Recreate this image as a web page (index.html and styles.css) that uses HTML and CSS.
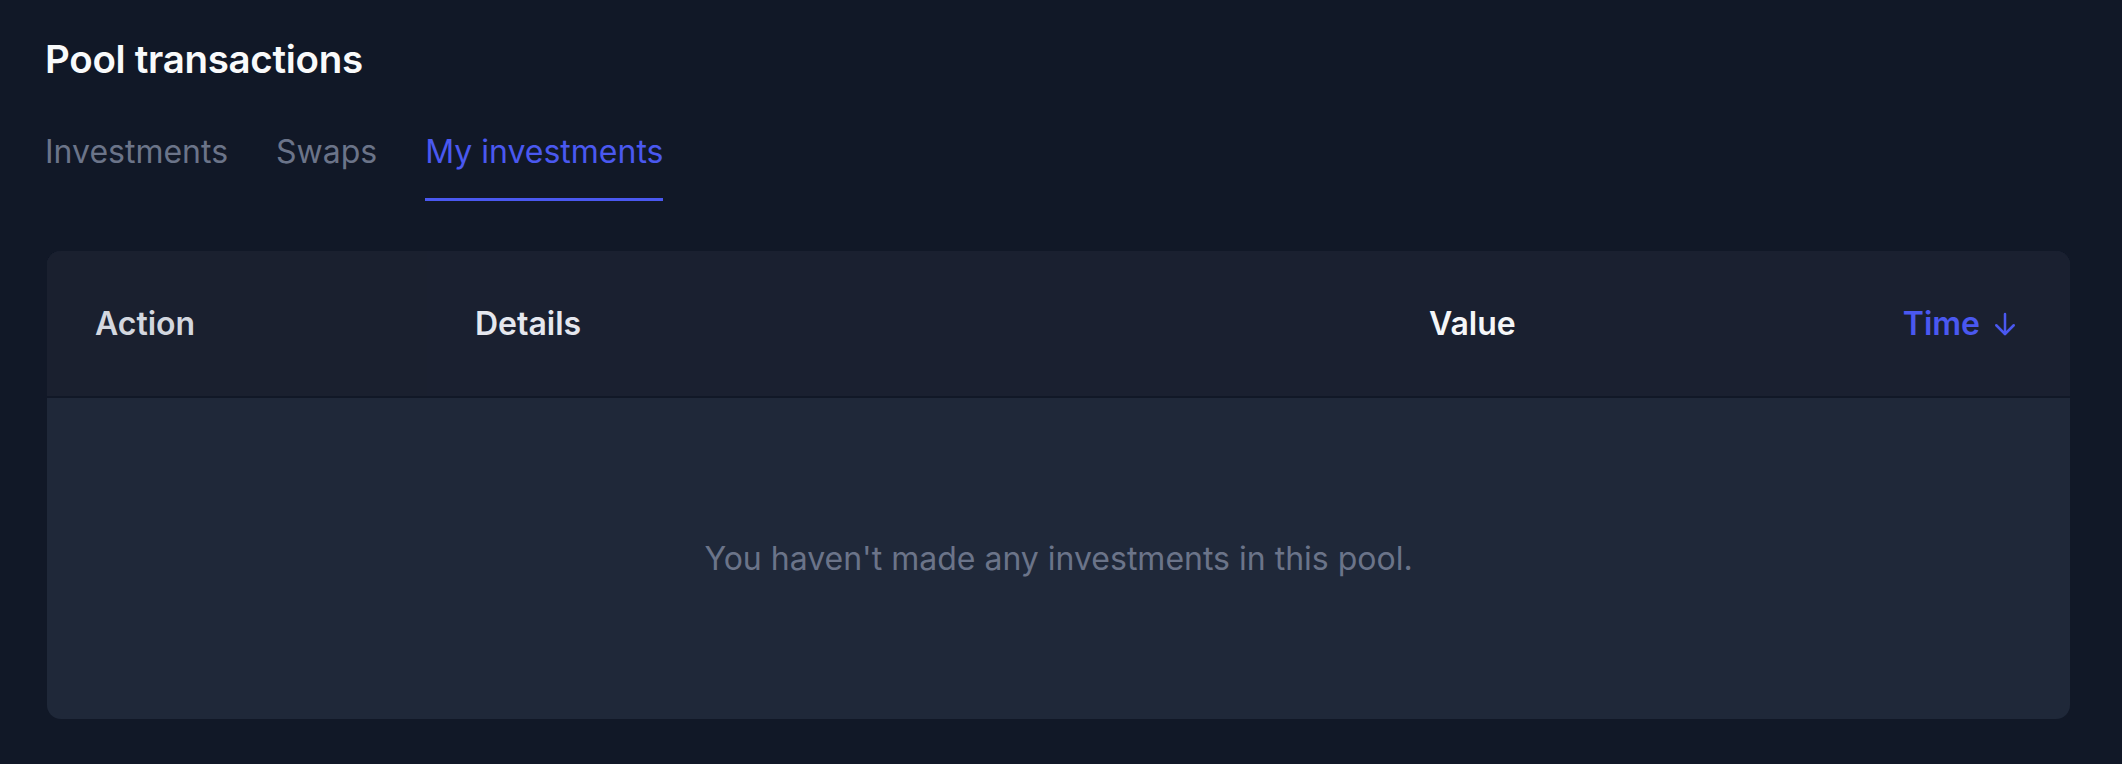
FILE: index.html
```html
<!DOCTYPE html>
<html lang="en">
<head>
<meta charset="utf-8">
<title>Pool transactions</title>
<link rel="stylesheet" href="styles.css">
</head>
<body>
<main class="page">
  <h2 class="title">Pool transactions</h2>
  <nav class="tabs">
    <a class="tab">Investments</a>
    <a class="tab">Swaps</a>
    <a class="tab tab-active">My investments</a>
  </nav>
  <section class="card">
    <div class="thead">
      <div class="th th-action">Action</div>
      <div class="th th-details">Details</div>
      <div class="th th-value">Value</div>
      <div class="th th-time">Time
        <svg class="sort-icon" viewBox="0 0 24 24" width="30" height="30" fill="none" stroke="currentColor" stroke-width="2" stroke-linecap="round" stroke-linejoin="round"><path d="M12 4v16"/><path d="M5 13l7 7 7-7"/></svg>
      </div>
    </div>
    <div class="tbody">
      <p class="empty">You haven't made any investments in this pool.</p>
    </div>
  </section>
</main>
</body>
</html>
```
FILE: styles.css
```css
html, body {
  margin: 0;
  padding: 0;
  background: #111827;
}
body {
  font-family: Inter, "Noto Sans", sans-serif;
  color: #f9fafb;
  height: 764px;
  overflow: hidden;
}
.page {
  padding: 31px 52px 0 45px;
}
.title {
  margin: 0;
  font-size: 38.5px;
  line-height: 56px;
  font-weight: 600;
  color: #f9fafb;
  letter-spacing: -0.3px;
}
.tabs {
  display: flex;
  gap: 48px;
  margin-top: 42px;
}
.tab {
  font-size: 32px;
  line-height: 45px;
  color: #6b7489;
  padding-bottom: 24px;
  border-bottom: 3px solid transparent;
}
.tab-active {
  color: #4a58f0;
  border-bottom-color: #4a58f0;
}
.card {
  margin-top: 50px;
  margin-left: 2px;
  border-radius: 14px;
  overflow: hidden;
  background: #1f2839;
}
.thead {
  display: grid;
  grid-template-columns: 380px 954px 1fr auto;
  align-items: center;
  height: 145px;
  background: #1a2030;
  border-bottom: 2px solid #111827;
}
.th {
  display: flex;
  align-items: center;
  height: 100%;
  padding: 0 48px;
  font-size: 32px;
  font-weight: 600;
}
.th-action {
  color: #d3d7df;
  background: #1a202f;
}
.th-details {
  color: #e5e7ee;
}
.th-value {
  color: #f5f6f8;
}
.th-time {
  color: #4a58f0;
  gap: 10px;
  padding-right: 50px;
}
.sort-icon {
  display: block;
}
.tbody {
  height: 321px;
  display: flex;
  align-items: center;
  justify-content: center;
}
.empty {
  margin: 0;
  font-size: 32px;
  color: #6b7489;
}
```
